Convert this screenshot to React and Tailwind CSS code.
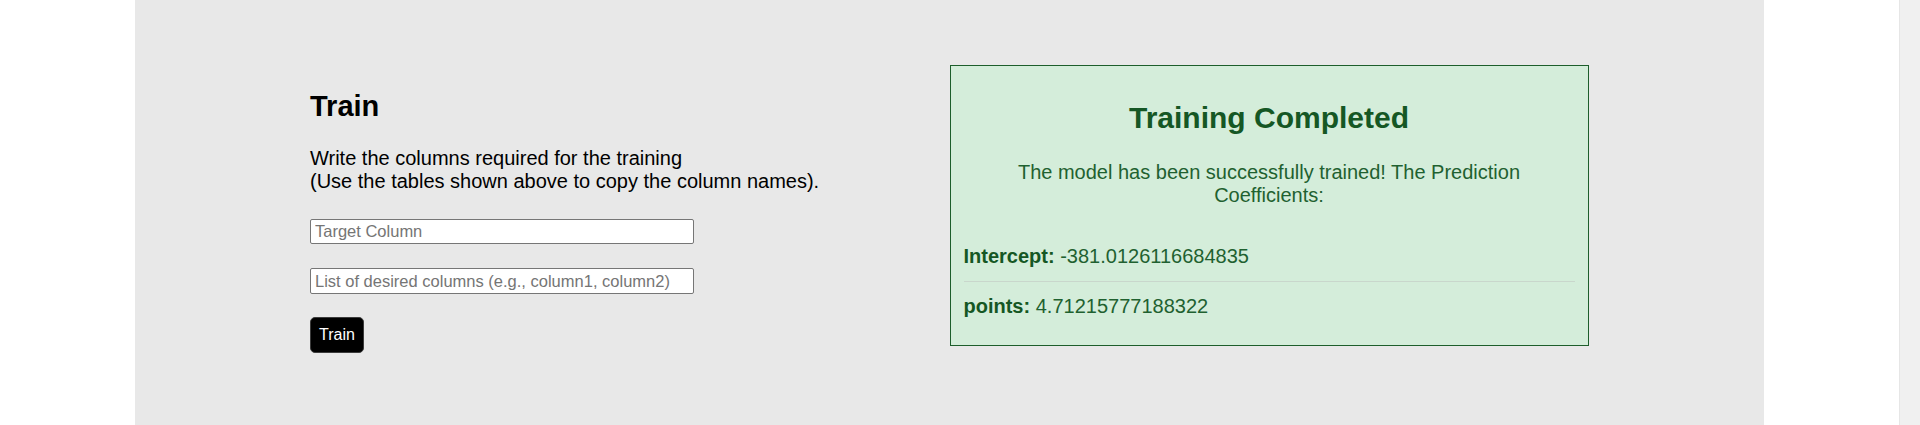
import React from 'react';

const FONT = { fontFamily: '"Liberation Sans", Arial, sans-serif' };

// Left column: the training form
const TrainForm = () => {
  return (
    <div className="pt-[25px] flex flex-col items-start">
      <h2 className="text-[29px] leading-[33px] font-bold text-black">Train</h2>
      <p className="mt-[24px] text-[20px] leading-[23px] text-black">
        Write the columns required for the training
        <br />
        (Use the tables shown above to copy the column names).
      </p>
      <input
        type="text"
        placeholder="Target Column"
        className="mt-[26px] w-[384px] h-[25px] px-[4px] bg-white border border-[#767676] rounded-[2px] text-[16.5px] text-black placeholder:text-[#757575] outline-none"
      />
      <input
        type="text"
        placeholder="List of desired columns (e.g., column1, column2)"
        className="mt-[24px] w-[384px] h-[26px] px-[4px] bg-white border border-[#767676] rounded-[2px] text-[16.5px] text-black placeholder:text-[#757575] outline-none"
      />
      <button className="mt-[23px] h-[36px] px-[8px] bg-black text-white text-[16px] leading-[18px] rounded-[5px] border border-[#3c3c3c]">
        Train
      </button>
    </div>
  );
};

// Right column: result card
const ResultCard = () => {
  const coefficients = [
    { name: 'Intercept', value: '-381.0126116684835' },
    { name: 'points', value: '4.71215777188322' },
  ];

  return (
    <div className="w-[639px] bg-[#d4edda] border border-[#1d5e2b] px-[13px] pt-[35px] pb-[15px] text-[#155724]">
      <h2 className="text-[30px] leading-[34.5px] font-bold text-center">Training Completed</h2>
      <p className="mt-[25px] text-[20px] leading-[23px] text-center text-[#1f6130]">
        The model has been successfully trained! The Prediction Coefficients:
      </p>
      <ul className="mt-[26px]">
        {coefficients.map((c, i) => (
          <li
            key={c.name}
            className={
              i === 0
                ? 'pt-[12px] pb-[13px] border-b border-[#c9d7cc] text-[20px] leading-[23px]'
                : 'pt-[13px] pb-[12px] text-[20px] leading-[23px]'
            }
          >
            <strong className="font-bold text-[#155724]">{c.name}:</strong>{' '}
            <span className="text-[#1f6130]">{c.value}</span>
          </li>
        ))}
      </ul>
    </div>
  );
};

export default function App() {
  return (
    <div className="w-full h-screen flex bg-white overflow-hidden" style={FONT}>
      <div className="flex-1 h-full">
        <div className="ml-[135px] w-[1629px] h-full bg-[#e8e8e8] px-[175px] pt-[65px]">
          <div className="grid grid-cols-2 items-start">
            <TrainForm />
            <ResultCard />
          </div>
        </div>
      </div>
      {/* scrollbar track */}
      <div className="w-[21px] h-full bg-[#f0f0f0] border-l border-[#e6e6e6]"></div>
    </div>
  );
}
